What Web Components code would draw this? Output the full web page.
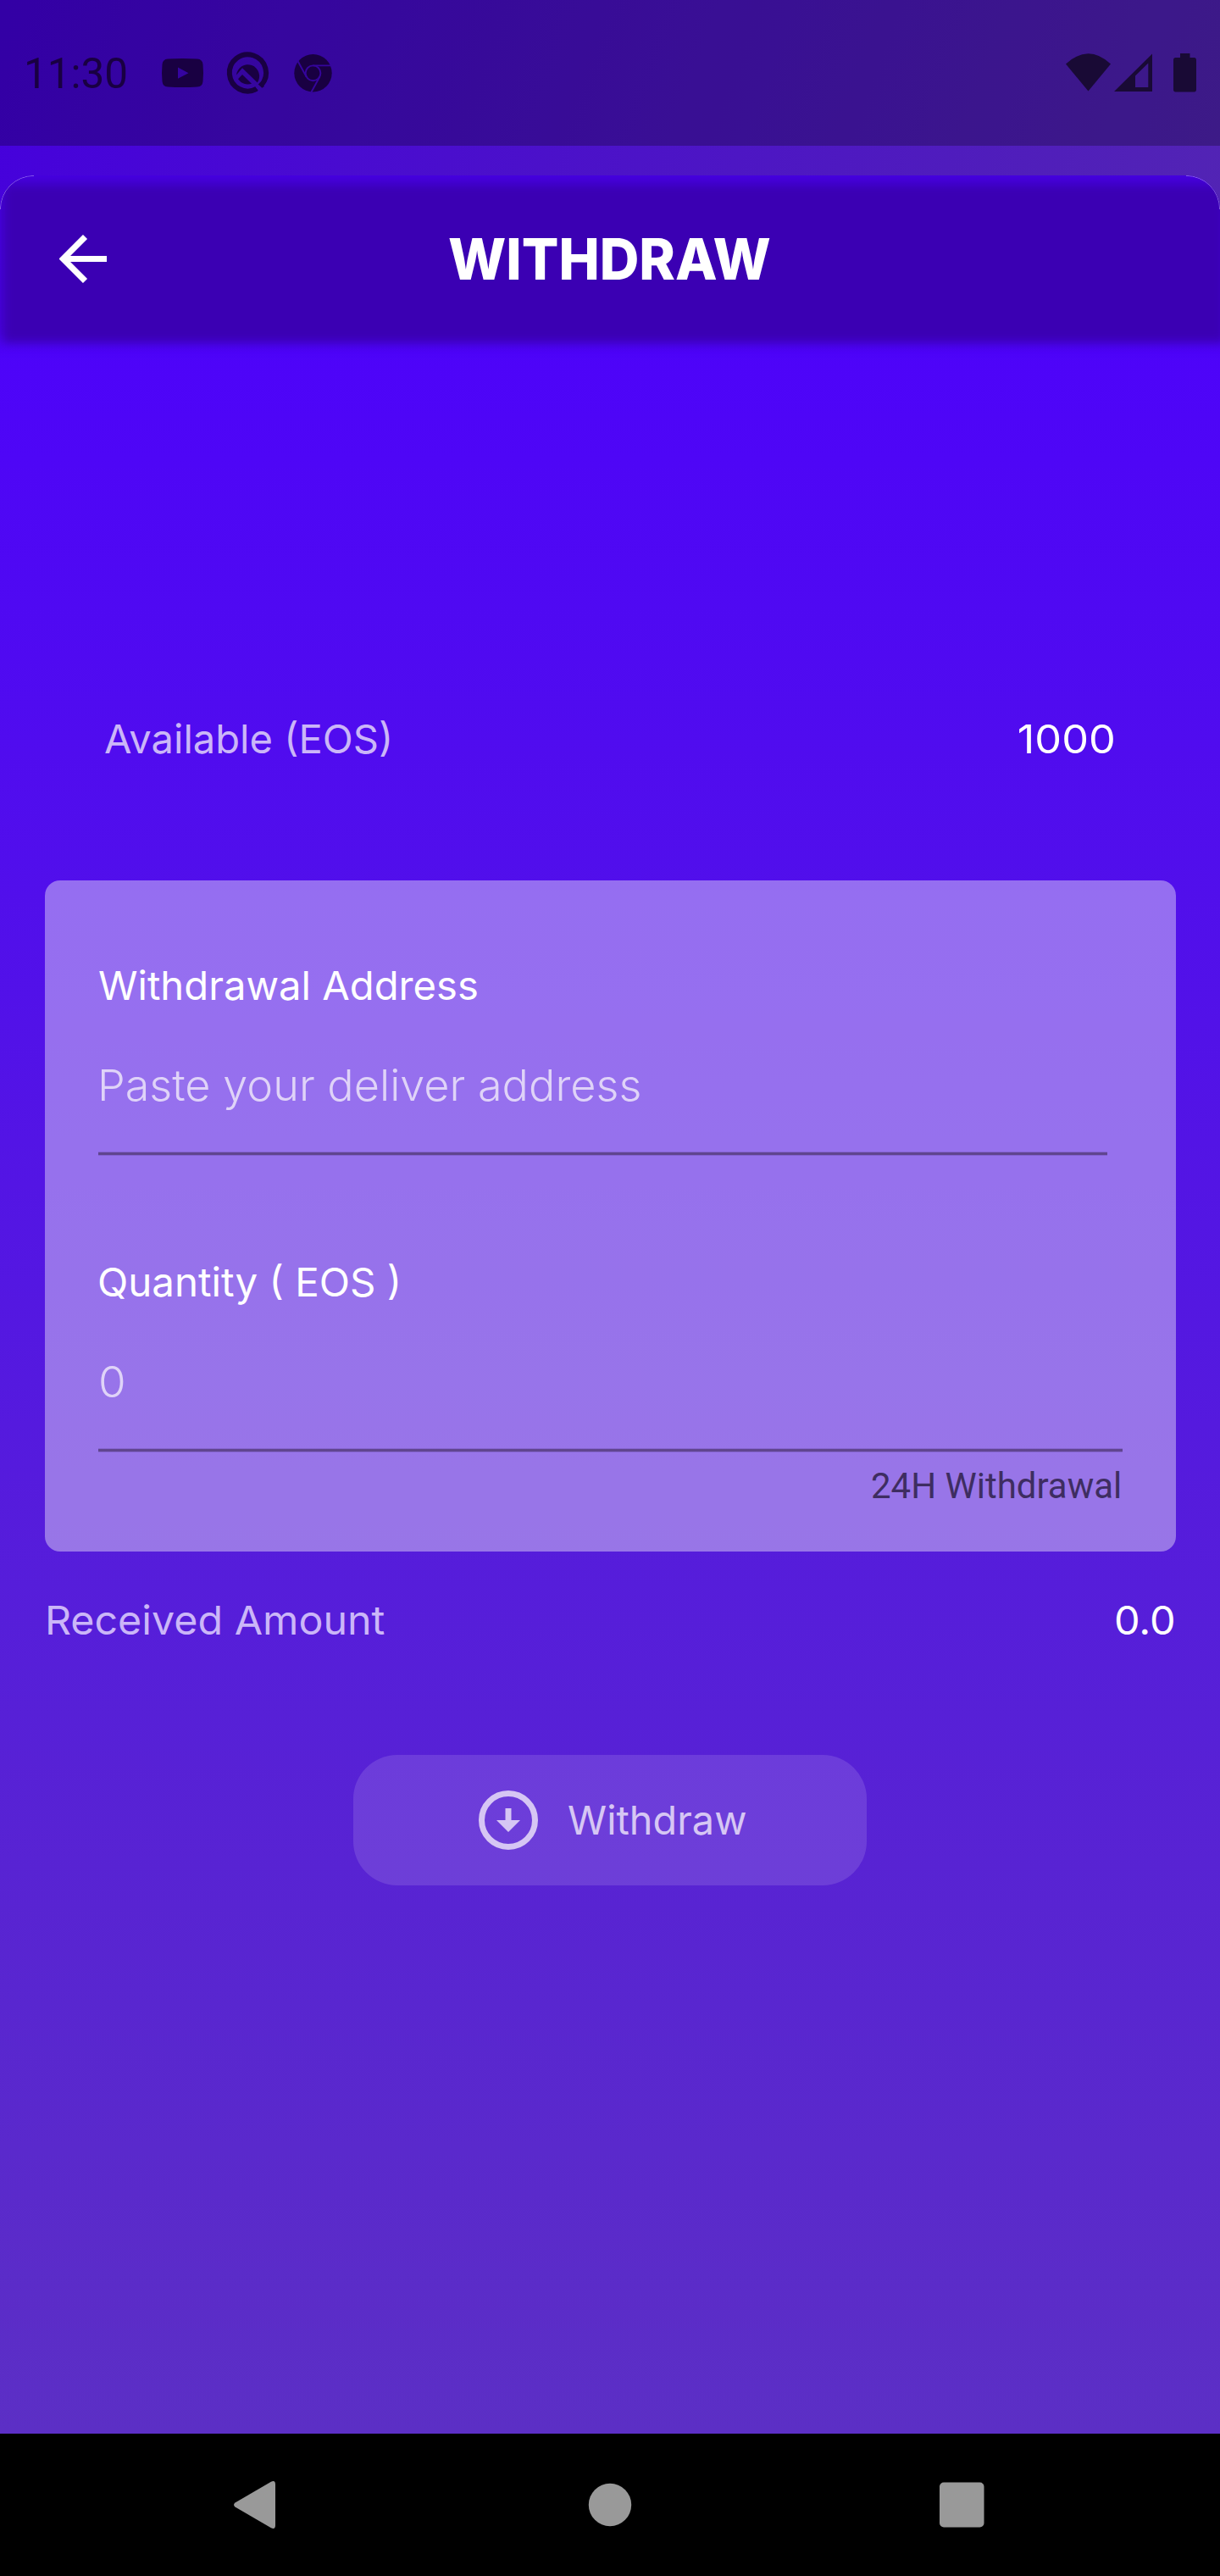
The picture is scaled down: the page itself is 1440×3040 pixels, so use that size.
<!DOCTYPE html>
<html lang="en">
<head>
<meta charset="utf-8">
<title>Withdraw</title>
<style>
html,body{margin:0;padding:0;background:#000}
</style>
</head>
<body>
<withdraw-screen></withdraw-screen>
<script>
const define = (name, html, extra) => {
  const t = document.createElement('template');
  t.innerHTML = html;
  customElements.define(name, class extends HTMLElement {
    constructor() {
      super();
      this.attachShadow({ mode: 'open' }).appendChild(t.content.cloneNode(true));
    }
    connectedCallback() { if (extra) extra(this); }
  });
};

/* One line of text, stretched so that its ink spans the "span" attribute in pixels. */
define('fitted-text', `
<style>:host{display:block;white-space:nowrap;flex:none}span{display:block;width:max-content;transform-origin:0 50%}</style><span><slot></slot></span>`, el => {
  const cs = getComputedStyle(el);
  const ctx = document.createElement('canvas').getContext('2d');
  ctx.font = `${cs.fontWeight} ${cs.fontSize} ${cs.fontFamily}`;
  const m = ctx.measureText(el.textContent);
  const span = parseFloat(el.getAttribute('span'));
  const scale = span / (m.actualBoundingBoxLeft + m.actualBoundingBoxRight);
  el.style.width = span + 'px';
  el.shadowRoot.querySelector('span').style.transform =
    `translateX(${m.actualBoundingBoxLeft * scale}px) scaleX(${scale})`;
});

define('status-bar', `
<style>
:host{display:flex;height:172px;background:rgba(0,0,0,.25);align-items:flex-start;justify-content:space-between;box-sizing:border-box;padding:57px 28px 0 32px;color:#190042}
.l,.r{display:flex;height:60px}
.time{font:400 50px/60px Roboto,sans-serif}
svg{display:block;fill:currentColor}
</style>
<div class="l">
<fitted-text class="time" span="117">11:30</fitted-text>
<svg width="260" height="60" viewBox="149 57 260 60">
<path fill-rule="evenodd" d="M198 69.5Q215.500 68.500 233 69.500Q239 70 239.500 76Q240.500 86 239.500 96Q239 102 233 102.500Q215.500 103.500 198 102.500Q192 102 191.500 96Q190.500 86 191.500 76Q192 70 198 69.500ZM210 79.500V92.800L222.500 86.200Z"/>
<path d="M308.400 100.500A21.600 21.600 0 1 0 302.800 104.900" fill="none" stroke="currentColor" stroke-width="6"/>
<path d="M307 97.500L312 102L309.300 103.800L304.700 99.500ZM301 102.800L304.800 106.500L301 108.500L299 104.500Z"/>
<path d="M279 88.500L286 80.300L303.800 97.500A13.600 13.600 0 1 0 279 88.500Z"/>
<path d="M281 93.300L286 88L297 98.800A13.600 13.600 0 0 1 281 93.300Z"/>
<circle cx="369.500" cy="86.300" r="22.200"/>
<g fill="none" stroke="#35049d" stroke-width="1.900"><circle cx="369.500" cy="86.300" r="8.900"/><path d="M369.500 77.400H391M361.700 90.800L351.500 72M377.300 90.800L367.300 109"/></g>
</svg>
</div>
<div class="r">
<svg width="154" height="60" viewBox="1258 57 154 60" style="color:#190a35">
<path d="M1258 75.500Q1284.500 51 1311 75.500L1284.500 107.500Z"/>
<path fill-rule="evenodd" d="M1315 108L1360 63.500V108ZM1340 89.500V103H1355.300V74.500Z"/>
<path d="M1393 63H1404.500V68H1409.500Q1412 68 1412 71V105.500Q1412 108.500 1409.500 108.500H1387.500Q1385 108.500 1385 105.500V71Q1385 68 1387.500 68H1393Z"/>
</svg>
</div>`);

define('sheet-header', `
<style>
:host{display:grid;grid-template-columns:530px 1fr;align-items:center;height:197px;position:relative;color:#fff}
.shade{position:absolute;inset:11px -6px 0 4px;background:#3b00b3;filter:blur(6px)}
.glow{position:absolute;inset:-12px -20px 2px -12px;background:rgba(59,0,179,.45);filter:blur(9px)}
svg{display:block;position:relative;margin-left:70px}
.title{position:relative;font:850 67px/80px Inter,sans-serif}
</style>
<div class="glow"></div><div class="shade"></div>
<svg width="57" height="57" viewBox="0 0 57 57" fill="none" stroke="#fff" stroke-width="7.200"><path d="M56 28.500H6M30.500 2.500L4.500 28.500L30.500 54.500"/></svg>
<fitted-text class="title" span="379">WITHDRAW</fitted-text>`);

define('amount-row', `
<style>
:host{display:flex;justify-content:space-between;font:440 47px/60px Inter,sans-serif;color:#fff}
::slotted([slot=label]){color:#cbb6f8}
</style>
<slot name="label"></slot><slot name="value"></slot>`);

define('line-field', `
<style>
:host{display:block}
.label{display:block;font:440 47px/60px Inter,sans-serif;color:#fff;margin-left:1px}
.hint{display:block;font:300 51px/70px Inter,sans-serif;color:#dfd3f8;margin:53px 0 43px 3px}
.rule{height:3px;border:solid rgba(60,38,110,.2);border-width:1px 0;background:#60458f;background-clip:padding-box}
</style>
<div class="label"><slot name="label"></slot></div>
<div class="hint"><slot name="hint"></slot></div>
<div class="rule"></div>`);

define('form-card', `
<style>
:host{display:flex;flex-direction:column;box-sizing:border-box;height:792px;margin:137px 52px 0 53px;padding:94px 63px 0;border-radius:18px;background:rgba(252,252,250,.4)}
</style><slot></slot>`);

define('withdraw-button', `
<style>
:host{display:flex;align-items:center;box-sizing:border-box;width:606px;height:154px;margin:129px 0 0 417px;padding-left:148px;border-radius:52px;background:rgba(255,255,255,.125);color:#d6c6f4}
svg{display:block;margin-right:36px}
.t{font:440 47px/60px Inter,sans-serif}
</style>
<svg width="70" height="70" viewBox="0 0 70 70"><circle cx="35" cy="35" r="31.500" fill="none" stroke="currentColor" stroke-width="7"/><path fill="currentColor" d="M31.500 21H38.500V35H49L35 49L21 35H31.500Z"/></svg>
<fitted-text class="t" span="209">Withdraw</fitted-text>`);

define('nav-bar', `
<style>
:host{display:block;height:168px;background:#000}
svg{display:block;fill:#999}
</style>
<svg width="1440" height="168" viewBox="0 2872 1440 168">
<path d="M277.500 2953.500L320 2928.800Q325 2926.500 325 2932V2980Q325 2985.500 320 2983.200L277.500 2958.500Q274.500 2956 277.500 2953.500Z"/>
<circle cx="720" cy="2956" r="25.200"/>
<rect x="1109" y="2929.500" width="52.500" height="53" rx="5"/>
</svg>`);

define('withdraw-screen', `
<style>
:host{display:flex;flex-direction:column;width:1440px;height:3040px;overflow:hidden}
.app{height:2872px;display:flex;flex-direction:column;background:linear-gradient(110deg,#4500dd 0,#5224b4 100%) 0 0/1440px 250px no-repeat,#4c00fc}
.gap{height:35px;flex:none}
.sheet{flex:1;overflow:hidden;border-radius:40px 40px 0 0;background:linear-gradient(#4c00fd,#5c2fc5);position:relative}
.edge{position:absolute;top:0;left:0;z-index:2}
.a{padding:438px 126px 0 124px}
.b{padding:51px 55px 0 57px}
.f1{width:1191px}
.f2{width:1209px;margin-top:119px}
.help{font:400 42px/50px Roboto,sans-serif;color:#3e2d61;margin:15px 0 0 913px}
</style>
<div class="app">
<status-bar></status-bar><div class="gap"></div>
<div class="sheet">
<svg class="edge" width="1440" height="42" fill="none" stroke="rgba(225,215,255,.5)" stroke-width="1"><path d="M.3 40A39.500 39.500 0 0 1 40 .3M1400 .3A39.500 39.500 0 0 1 1439.700 40"/></svg>
<sheet-header></sheet-header>
<amount-row class="a"><fitted-text slot="label" span="336">Available (EOS)</fitted-text><fitted-text slot="value" span="111">1000</fitted-text></amount-row>
<form-card>
<line-field class="f1"><fitted-text slot="label" span="446">Withdrawal Address</fitted-text><fitted-text slot="hint" span="636">Paste your deliver address</fitted-text></line-field>
<line-field class="f2"><fitted-text slot="label" span="353">Quantity ( EOS )</fitted-text><fitted-text slot="hint" span="27">0</fitted-text></line-field>
<fitted-text class="help" span="293">24H Withdrawal</fitted-text>
</form-card>
<amount-row class="b"><fitted-text slot="label" span="397">Received Amount</fitted-text><fitted-text slot="value" span="68">0.0</fitted-text></amount-row>
<withdraw-button></withdraw-button>
</div>
</div>
<nav-bar></nav-bar>`);
</script>
</body>
</html>
